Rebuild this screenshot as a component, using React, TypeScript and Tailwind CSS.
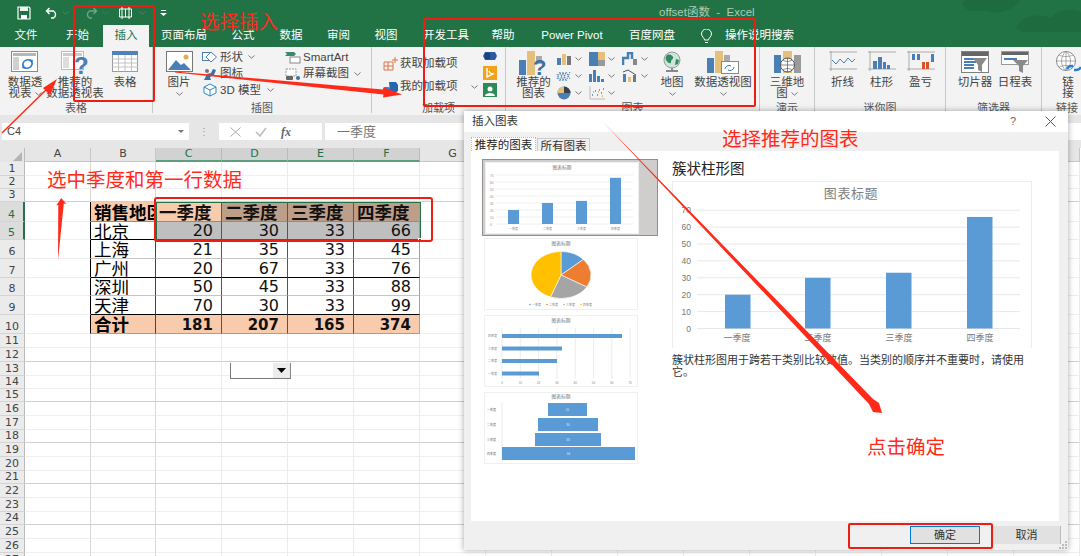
import React from 'react';

const Chev = ({ className = '' }: { className?: string }) => (
  <svg width="7" height="4" viewBox="0 0 7 4" className={`shrink-0 ${className}`}>
    <path d="M.5.5 3.5 3.2 6.5.5" fill="none" stroke="#777" strokeWidth="1" />
  </svg>
);

const Big = ({ icon, lines, chev, w }: { icon: React.ReactNode; lines: string[]; chev?: 'below' | 'inline'; w: string }) => (
  <div className={`flex flex-col items-center pt-[4px] ${w}`}>
    <div className="h-[26px] flex items-start justify-center">{icon}</div>
    {lines.map((l, i) => (
      <div key={i} className="h-[11px] leading-[11px] whitespace-nowrap flex items-center gap-[3px]">
        {l}
        {chev === 'inline' && i === lines.length - 1 && <Chev />}
      </div>
    ))}
    {chev === 'below' && <Chev className="mt-[4px]" />}
  </div>
);

const Group = ({ label, w, pad = '', children }: { label: string; w: string; pad?: string; children: React.ReactNode }) => (
  <div className={`flex flex-col h-[66px] border-r border-[#c8c8c8] shrink-0 ${w}`}>
    <div className={`flex h-[56px] shrink-0 ${pad}`}>{children}</div>
    <div className="h-[12px] shrink-0 leading-[11px] text-center text-[11px] text-[#555] whitespace-nowrap">{label}</div>
  </div>
);

const PivotIcon = () => (
  <svg width="28" height="22" viewBox="0 0 28 22">
    <rect x=".5" y=".5" width="26" height="20" fill="#fff" stroke="#8a8a8a" />
    <rect x="2" y="2" width="23" height="3" fill="#b5b5b5" />
    <rect x="2" y="6" width="6" height="13" fill="#d0d0d0" />
    <path d="M12 15a5 5 0 0 1 8-5M21 11a5 5 0 0 1-8 5" fill="none" stroke="#2b7cd3" strokeWidth="1.6" />
    <path d="m18 8 4 1-1 4ZM15 18l-4-1 1-4Z" fill="#2b7cd3" />
  </svg>
);

const RecPivotIcon = () => (
  <svg width="28" height="24" viewBox="0 0 28 24">
    <rect x=".5" y=".5" width="22" height="18" fill="#fff" stroke="#bbb" />
    <rect x="2" y="2" width="19" height="3" fill="#ccc" />
    <rect x="2" y="6" width="6" height="11" fill="#ddd" />
    <text x="13" y="23" fontSize="24" fontWeight="700" fill="#4a7fb5" fontFamily="Liberation Sans, sans-serif">?</text>
  </svg>
);

const TableIcon = () => (
  <svg width="26" height="21" viewBox="0 0 26 21">
    <rect x=".5" y=".5" width="25" height="20" fill="#fff" stroke="#9a9a9a" />
    <rect x="0" y="0" width="26" height="4" fill="#4f81bd" />
    <path d="M0 8h26M0 12h26M0 16h26M6.500 4v17M13 4v17M19.500 4v17" stroke="#b4b4b4" strokeWidth=".8" />
  </svg>
);

const PictureIcon = () => (
  <svg width="27" height="21" viewBox="0 0 27 21">
    <rect x=".5" y=".5" width="26" height="20" fill="#fff" stroke="#777" />
    <circle cx="20" cy="6" r="2.500" fill="#e9a94b" />
    <path d="M2 19 10 9l5 5 3-2 7 7Z" fill="#4a7fb5" />
  </svg>
);

const Small = ({ children }: { children: React.ReactNode }) => (
  <svg width="16" height="14" viewBox="0 0 16 14" className="shrink-0">{children}</svg>
);

const ShapeIcon = () => <Small><rect x=".5" y="2.500" width="9" height="8" fill="#fff" stroke="#4a7fb5" /><path d="m9 2 5.500 5L9 12 4 7Z" fill="#fff" stroke="#4a7fb5" /></Small>;
const PeopleIcon = () => <Small><path d="M2 13 5 7l4-1 2-4 3 1-2 5-4 2 1 3Z" fill="#3f6f9f" /><circle cx="5" cy="4" r="2" fill="#777" /></Small>;
const CubeIcon = () => <Small><path d="m8 1 6 3v6l-6 3-6-3V4Zm0 6 6-3M8 7 2 4m6 3v6" fill="#fff" stroke="#2b88c9" /></Small>;
const ArtIcon = () => <Small><path d="M0 2h9l2 2-2 2H0l2-2Z" fill="#3a8a6a" /><rect x="5" y="7" width="10" height="6" fill="#fff" stroke="#888" /></Small>;
const ShotIcon = () => <Small><rect x="1" y="2" width="10" height="7" fill="#fff" stroke="#999" strokeDasharray="2 1" /><rect x="1" y="9" width="7" height="4" rx="1" fill="#666" /><circle cx="13" cy="11" r="2" fill="#3f6f9f" /></Small>;
const GetIcon = () => <Small><path d="M1 5h9v8H1ZM1 9h9M5 5v8" fill="none" stroke="#d9754a" /><path d="M12 0v6M9 3h6" stroke="#d9754a" /></Small>;
const MyIcon = () => <Small><path d="M6 2h7l2 3v6l-3 2H7Z" fill="#2566b0" /><rect x="0" y="7" width="7" height="6" rx="2" fill="#1e88e5" /></Small>;
const VisioIcon = () => <Small><path d="M3 3h10l2 4-2 4H3L1 7Z" fill="#2c5aa0" /><rect x="3" y="4" width="5" height="6" fill="#1d3f7a" /></Small>;
const BingIcon = () => <Small><rect x="1" y="0" width="14" height="14" fill="#f2a31a" /><path d="M5 2v9l6-3-3-1-1-2" fill="none" stroke="#fff" strokeWidth="1.400" /></Small>;
const PeopleGreen = () => <Small><rect x="1" y="0" width="14" height="14" fill="#2c8a54" /><circle cx="8" cy="6" r="2.500" fill="#fff" /><path d="M3 13c0-4 10-4 10 0Z" fill="#fff" /></Small>;

const MiniBars = () => (
  <Small><rect x="1" y="6" width="4" height="7" fill="#4a7fb5" /><rect x="6" y="2" width="4" height="11" fill="#e5c07b" /><rect x="11" y="4" width="4" height="9" fill="#777" /></Small>
);
const MiniTree = () => <Small><rect x="0" y="0" width="9" height="14" fill="#4a7fb5" /><rect x="9" y="0" width="7" height="8" fill="#e5c07b" /><rect x="9" y="8" width="7" height="6" fill="#999" /></Small>;
const MiniStep = () => <Small><path d="M1 13V6h5V1h4v6" fill="none" stroke="#4a7fb5" strokeWidth="2.500" /><rect x="11" y="7" width="4" height="6" fill="#888" /></Small>;
const MiniLine = () => <Small><path d="M1 5 4 12l3-9 3 9 4-9M1 10l3-7 3 9 3-9 4 7" fill="none" stroke="#4a7fb5" strokeDasharray="1.500 .7" /></Small>;
const MiniCol = () => <Small><rect x="0" y="5" width="3" height="8" fill="#4a7fb5" /><rect x="4" y="1" width="3" height="12" fill="#4a7fb5" /><rect x="8" y="7" width="3" height="6" fill="#4a7fb5" /><rect x="12" y="10" width="3" height="3" fill="#4a7fb5" /></Small>;
const MiniCombo = () => <Small><rect x="1" y="5" width="3" height="8" fill="#4a7fb5" /><rect x="6" y="8" width="3" height="5" fill="#e5c07b" /><rect x="11" y="6" width="3" height="7" fill="#777" /><path d="m1 3 5-2 8 5" fill="none" stroke="#555" /></Small>;
const MiniPie = () => <Small><circle cx="8" cy="7" r="6.500" fill="#4a7fb5" /><path d="M8 7V.5A6.500 6.500 0 0 0 1.500 7Z" fill="#e5c07b" /><path d="M8 7V.5A6.500 6.500 0 0 1 14.500 7Z" fill="#333" opacity=".8" /></Small>;
const MiniDots = () => <Small><path d="M1 0v13h15" fill="none" stroke="#bbb" /><path d="M3 9h1M6 5h1M8 9h1M10 4h1M12 7h1M14 3h1" stroke="#4a7fb5" strokeWidth="1.500" /><path d="M4 6h1M9 6h1M13 10h1" stroke="#e5a44b" strokeWidth="1.500" /></Small>;

const RecChartIcon = () => (
  <svg width="29" height="25" viewBox="0 0 29 25">
    <rect x="0" y="9" width="7" height="15" fill="#4a7fb5" />
    <rect x="8" y="0" width="8" height="24" fill="#e5c07b" />
    <rect x="17" y="5" width="6" height="8" fill="#aaa" />
    <text x="14" y="24" fontSize="22" fontWeight="700" fill="#3f6f9f" fontFamily="Liberation Sans, sans-serif">?</text>
  </svg>
);
const GlobeIcon = () => (
  <svg width="22" height="23" viewBox="0 0 22 23">
    <circle cx="11" cy="9" r="8" fill="#cfe5dc" stroke="#999" />
    <path d="M6 4c3-1 5 0 6 2s-2 2-2 5-4 0-5-2 0-4 1-5Zm9 4 3 1-1 4-3 1Z" fill="#2f8a5f" />
    <path d="M5 20h12M11 17v3" stroke="#888" strokeWidth="2" />
  </svg>
);
const PivotChartIcon = () => (
  <svg width="32" height="23" viewBox="0 0 32 23">
    <rect x="0" y="7" width="7" height="15" fill="#4a7fb5" />
    <rect x="8" y="0" width="8" height="22" fill="#e5c07b" />
    <rect x="17" y="4" width="6" height="8" fill="#aaa" />
    <rect x="14.500" y="10.500" width="17" height="12" fill="#fff" stroke="#888" />
    <path d="M18 18a4 4 0 0 1 6-3M27 16a4 4 0 0 1-6 3" fill="none" stroke="#2b7cd3" />
  </svg>
);
const MapIcon = () => (
  <svg width="27" height="24" viewBox="0 0 27 24">
    <path d="M0 4h7v18H0Z" fill="#4a7fb5" /><path d="M9 0h9v22H9Z" fill="#e5c07b" /><path d="M20 4h7v18h-7Z" fill="#9a9a9a" />
    <circle cx="13.500" cy="14" r="7" fill="#fff" stroke="#555" /><path d="M6.500 14h14M13.500 7v14M9 9c3 2 6 2 9 0M9 19c3-2 6-2 9 0" fill="none" stroke="#555" strokeWidth=".7" />
  </svg>
);
const SparkFrame = ({ children }: { children: React.ReactNode }) => (
  <svg width="28" height="20" viewBox="0 0 28 20"><path d="M0 1h28M0 18h28M2 0v20" stroke="#999" strokeWidth=".8" />{children}</svg>
);
const SlicerIcon = () => (
  <svg width="28" height="22" viewBox="0 0 28 22">
    <rect x=".5" y=".5" width="27" height="21" fill="#fff" stroke="#7f7f7f" />
    <rect x="1" y="1" width="26" height="4" fill="#666" />
    <path d="M3 8h12M3 11h12M3 14h10M3 17h10" stroke="#4a7fb5" strokeWidth="2" />
    <path d="M12 7h14l-5 7v7l-4-2v-5Z" fill="#8a8a8a" />
  </svg>
);
const TimelineIcon = () => (
  <svg width="28" height="22" viewBox="0 0 28 22">
    <rect x=".5" y=".5" width="27" height="13" fill="#fff" stroke="#999" />
    <rect x="1" y="1" width="26" height="3" fill="#666" />
    <path d="M3 8h13" stroke="#4a7fb5" strokeWidth="2" />
    <path d="M12 9h15l-5 6v7l-4-2v-5Z" fill="#8a8a8a" />
  </svg>
);
const LinkIcon = () => (
  <svg width="26" height="24" viewBox="0 0 26 24">
    <circle cx="11" cy="10" r="9.500" fill="#fff" stroke="#8a8a8a" />
    <path d="M1.500 10h19M11 .5v19M4 4c4 2 10 2 14 0M4 16c4-2 10-2 14 0M11 .5c-6 5-6 14 0 19M11 .5c6 5 6 14 0 19" fill="none" stroke="#8a8a8a" strokeWidth=".7" />
    <path d="M12 18c2-4 5-3 6-3M26 16c-2 4-5 3-7 3" fill="none" stroke="#2b7cd3" strokeWidth="2.500" />
  </svg>
);

const tabs = [
  ['文件', 'w-[52px]'], ['开始', 'w-[51px]'], ['插入', 'w-[46px]'], ['页面布局', 'w-[70px]'], ['公式', 'w-[48px]'], ['数据', 'w-[48px]'],
  ['审阅', 'w-[47px]'], ['视图', 'w-[48px]'], ['开发工具', 'w-[72px]'], ['帮助', 'w-[42px]'], ['Power Pivot', 'w-[96px]'], ['百度网盘', 'w-[64px]'],
];

const TitleBar = () => (
  <div className="bg-[#217346] h-[47px] shrink-0 relative overflow-hidden">
    <svg width="125" height="32" viewBox="0 0 125 32" className="absolute right-0 top-0 opacity-40">
      <path d="M8 0c-6 8 8 14 20 10 14 6 30 0 36-10ZM60 28c4-12 24-16 34-10 10-10 24-10 31-6v20H66Z" fill="#1b6139" />
    </svg>
    <div className="flex h-[25px] items-center relative">
      <div className="w-[659px] flex items-center pl-[17px] shrink-0">
        <svg width="14" height="14" viewBox="0 0 14 14"><path d="M1 1h11l1 1v11H1Z" fill="none" stroke="#fff" strokeWidth="1.200" /><rect x="3" y="1" width="8" height="4" fill="#fff" opacity=".9" /><rect x="4" y="9" width="6" height="4" fill="#fff" /></svg>
        <svg width="14" height="12" viewBox="0 0 14 12" className="ml-[14px]"><path d="M1.500 4h7a4 4 0 0 1 0 7H6M4.500 1 1.500 4l3 3" fill="none" stroke="#fff" strokeWidth="1.400" /></svg>
        <Chev className="ml-[3px] opacity-70" />
        <svg width="14" height="12" viewBox="0 0 14 12" className="ml-[15px]"><path d="M12.500 4h-7a4 4 0 0 0 0 7H8M9.500 1l3 3-3 3" fill="none" stroke="#6fa588" strokeWidth="1.400" /></svg>
        <Chev className="ml-[4px] opacity-50" />
        <svg width="15" height="14" viewBox="0 0 15 14" className="ml-[9px]"><path d="M1.500 3h12v8h-12ZM4 1v12M11 1v12M7.500 3v8" fill="none" stroke="#fff" /></svg>
        <Chev className="ml-[6px] opacity-70" />
        <svg width="7" height="6" viewBox="0 0 7 6" className="ml-[14px]"><path d="M0 3h7L3.500 6Z" fill="#fff" /><path d="M1 .5h5" stroke="#fff" /></svg>
      </div>
      <span className="text-[11.5px] text-[#a9cdb8] whitespace-pre">offset函数  -  Excel</span>
    </div>
    <div className="flex h-[22px] items-stretch relative text-[11.5px] text-white">
      {tabs.map(([t, w]) => (
        <div key={t} className={`${w} flex items-center justify-center whitespace-nowrap ${t === '插入' ? 'bg-[#f3f3f3] text-[#217346]' : ''}`}>{t}</div>
      ))}
      <div className="flex items-center pl-[16px]">
        <svg width="13" height="15" viewBox="0 0 13 15"><path d="M4.500 11c0-2-3-3.500-3-6a5 5 0 0 1 10 0c0 2.500-3 4-3 6ZM5 13.500h3" fill="none" stroke="#fff" /></svg>
        <span className="ml-[12px]">操作说明搜索</span>
      </div>
    </div>
  </div>
);

const chartCells: React.ReactNode[] = [
  <MiniBars />, <MiniTree />, <MiniStep />,
  <MiniLine />, <MiniCol />, <MiniCombo />,
  <MiniPie />, <MiniDots />,
];

const Ribbon = () => (
  <div className="bg-[#f3f3f3] h-[68px] shrink-0 flex text-[11.5px] text-[#444] overflow-hidden">
    <Group label="表格" w="w-[153px]">
      <Big w="w-[50px]" icon={<PivotIcon />} lines={['数据透', '视表']} chev="inline" />
      <Big w="w-[50px]" icon={<RecPivotIcon />} lines={['推荐的', '数据透视表']} />
      <Big w="w-[50px]" icon={<TableIcon />} lines={['表格']} />
    </Group>
    <Group label="插图" w="w-[219px]" pad="pl-[3px]">
      <Big w="w-[46px]" icon={<PictureIcon />} lines={['图片']} chev="below" />
      <div className="w-[83px] pt-[2px]">
        <div className="h-[16.500px] flex items-center gap-[2px]"><ShapeIcon />形状<Chev className="ml-[3px]" /></div>
        <div className="h-[16.500px] flex items-center gap-[2px]"><PeopleIcon />图标</div>
        <div className="h-[16.500px] flex items-center gap-[2px]"><CubeIcon />3D 模型<Chev className="ml-[4px]" /></div>
      </div>
      <div className="pt-[2px]">
        <div className="h-[16.500px] flex items-center gap-[2px]"><ArtIcon />SmartArt</div>
        <div className="h-[16.500px] flex items-center gap-[2px]"><ShotIcon />屏幕截图<Chev className="ml-[3px]" /></div>
      </div>
    </Group>
    <Group label="加载项" w="w-[134px]" pad="pl-[11px]">
      <div className="w-[99px] pt-[5px]">
        <div className="h-[23px] flex items-center gap-[1px] whitespace-nowrap"><GetIcon />获取加载项</div>
        <div className="h-[23px] flex items-center gap-[1px] whitespace-nowrap"><MyIcon />我的加载项<Chev className="ml-[12px]" /></div>
      </div>
      <div className="pt-[2px] flex flex-col gap-[3px]"><VisioIcon /><BingIcon /><PeopleGreen /></div>
    </Group>
    <Group label="图表" w="w-[254px]" pad="pl-[5px]">
      <Big w="w-[45px]" icon={<RecChartIcon />} lines={['推荐的', '图表']} />
      <div className="w-[99px] grid grid-cols-3 auto-rows-[17px] pt-[3px]">
        {chartCells.map((icon, i) => (
          <div key={i} className="flex items-center gap-[3px]">{icon}<Chev /></div>
        ))}
      </div>
      <Big w="w-[34px]" icon={<GlobeIcon />} lines={['地图']} chev="below" />
      <Big w="w-[68px]" icon={<PivotChartIcon />} lines={['数据透视图']} chev="below" />
    </Group>
    <Group label="演示" w="w-[55px]">
      <Big w="w-full" icon={<MapIcon />} lines={['三维地', '图']} chev="inline" />
    </Group>
    <Group label="迷你图" w="w-[131px]" pad="pl-[8px]">
      <Big w="w-[39px]" lines={['折线']} icon={<SparkFrame><path d="M3 9l4 4 4-5 4 4 4-5 4 4 3-3" fill="none" stroke="#4a7fb5" /></SparkFrame>} />
      <Big w="w-[39px]" lines={['柱形']} icon={<SparkFrame><path d="M5 10h4v8H5ZM10 6h4v12h-4ZM15 11h3v7h-3ZM19 14h3v4h-3Z" fill="#4a7fb5" /></SparkFrame>} />
      <Big w="w-[39px]" lines={['盈亏']} icon={<SparkFrame><path d="M5 3h3v6H5ZM10 3h3v6h-3ZM24 3h3v8h-3Z" fill="#4a7fb5" /><path d="M15 11h3v7h-3ZM19 11h3v7h-3Z" fill="#d9542b" /></SparkFrame>} />
    </Group>
    <Group label="筛选器" w="w-[96px]" pad="pl-[9px]">
      <Big w="w-[40px]" icon={<SlicerIcon />} lines={['切片器']} />
      <Big w="w-[40px]" icon={<TimelineIcon />} lines={['日程表']} />
    </Group>
    <div className="flex flex-col h-[66px] flex-1">
      <div className="flex h-[56px] shrink-0 pl-[6px]"><Big w="w-[40px]" icon={<LinkIcon />} lines={['链', '接']} /></div>
      <div className="h-[12px] shrink-0 leading-[11px] text-[11px] pl-[14px] text-[#555] whitespace-nowrap">链接</div>
    </div>
  </div>
);

const FormulaBar = () => (
  <div className="bg-[#e6e6e6] h-[33px] shrink-0 flex items-start pt-[8px] pl-[2px]">
    <div className="w-[187px] h-[17px] bg-white flex items-center justify-between px-[5px] text-[11px] text-[#444]">C4<svg width="6" height="3" viewBox="0 0 6 3"><path d="M0 0h6L3 3Z" fill="#777" /></svg></div>
    <div className="w-[30px] flex justify-center items-center h-[17px] text-[#999] text-[10px]">⋮</div>
    <div className="w-[103px] h-[17px] bg-white flex items-center pl-[11px] gap-[14px]">
      <svg width="11" height="10" viewBox="0 0 11 10"><path d="m.5.5 10 9m0-9-10 9" stroke="#aaa" /></svg>
      <svg width="12" height="10" viewBox="0 0 12 10"><path d="m1 5 4 4 6-8" fill="none" stroke="#bbb" strokeWidth="1.500" /></svg>
      <span className="font-['Liberation_Serif',serif] italic text-[12px] text-[#666] font-bold">fx</span>
    </div>
    <div className="ml-[3px] flex-1 h-[17px] bg-white flex items-center pl-[12px] text-[13px] text-[#777]">一季度</div>
  </div>
);

const colW = ['w-[66px]', 'w-[65px]', 'w-[66px]', 'w-[66px]', 'w-[66px]', 'w-[66px]', 'w-[66px]', 'w-[66px]', 'w-[66px]', 'w-[66px]', 'w-[66px]', 'w-[66px]', 'w-[66px]', 'w-[66px]', 'w-[66px]', 'w-[66px]'];
const colNames = ['A', 'B', 'C', 'D', 'E', 'F', 'G', 'H', 'I', 'J', 'K', 'L', 'M', 'N', 'O', 'P'];

type Row = { n: number; h: string; strong?: boolean };
const plainRows: Row[] = [
  { n: 11, h: 'h-[14px]' }, { n: 12, h: 'h-[14px]', strong: true }, { n: 13, h: 'h-[14px]' }, { n: 14, h: 'h-[13px]' }, { n: 15, h: 'h-[13px]', strong: true },
  { n: 16, h: 'h-[14px]' }, { n: 17, h: 'h-[14px]' }, { n: 18, h: 'h-[13px]', strong: true }, { n: 19, h: 'h-[14px]' }, { n: 20, h: 'h-[14px]' },
  { n: 21, h: 'h-[13px]', strong: true }, { n: 22, h: 'h-[14px]' }, { n: 23, h: 'h-[14px]' }, { n: 24, h: 'h-[13px]', strong: true }, { n: 25, h: 'h-[14px]' },
  { n: 26, h: 'h-[14px]' }, { n: 27, h: 'h-[14px]' },
];

const RowHead = ({ n, sel }: { n: number; sel?: boolean }) => (
  <div className={`w-[25px] shrink-0 flex items-end justify-center leading-[13px] text-[11px] font-['DejaVu_Sans',sans-serif] border-b border-[#d4d4d4] ${sel ? 'bg-[#dcdcdc] text-[#217346] border-r-2 border-r-[#217346]' : 'bg-[#ebebeb] text-[#444] border-r border-r-[#bbb]'}`}>{n}</div>
);

const PlainRow = ({ r }: { r: Row }) => (
  <div className={`flex ${r.h}`}>
    <RowHead n={r.n} />
    {colW.map((w, i) => (
      <div key={i} className={`${w} shrink-0 border-b border-r ${r.strong ? 'border-b-[#cfcfcf]' : 'border-b-[#efefef]'} ${i < 2 ? 'border-r-[#d8d8d8]' : 'border-r-[#ececec]'}`} />
    ))}
  </div>
);

type DataRow = { n: number; h: string; name: string; vals: (string | number)[]; kind: 'head' | 'sel' | 'body' | 'total'; line: string };
const dataRows: DataRow[] = [
  { n: 4, h: 'h-[20px]', name: '销售地区', vals: ['一季度', '二季度', '三季度', '四季度'], kind: 'head', line: 'border-b-[#9a8a7c]' },
  { n: 5, h: 'h-[18px]', name: '北京', vals: [20, 30, 33, 66], kind: 'sel', line: 'border-b-black' },
  { n: 6, h: 'h-[19px]', name: '上海', vals: [21, 35, 33, 45], kind: 'body', line: 'border-b-[#c4c4c4]' },
  { n: 7, h: 'h-[19px]', name: '广州', vals: [20, 67, 33, 76], kind: 'body', line: 'border-b-black' },
  { n: 8, h: 'h-[18px]', name: '深圳', vals: [50, 45, 33, 88], kind: 'body', line: 'border-b-[#c4c4c4]' },
  { n: 9, h: 'h-[19px]', name: '天津', vals: [70, 30, 33, 99], kind: 'body', line: 'border-b-black' },
  { n: 10, h: 'h-[19px]', name: '合计', vals: [181, 207, 165, 374], kind: 'total', line: 'border-b-[#a0a0a0]' },
];

const cellFill = (kind: DataRow['kind'], i: number) => {
  if (kind === 'head') return i === 0 ? 'bg-[#f8cbad]' : 'bg-[#bd9e88]';
  if (kind === 'sel') return 'bg-[#bfbfbf]';
  if (kind === 'total') return 'bg-[#f8cbad]';
  return 'bg-white';
};

const TableRow = ({ r }: { r: DataRow }) => {
  const isHead = r.kind === 'head';
  const isTotal = r.kind === 'total';
  return (
    <div className={`flex ${r.h}`}>
      <RowHead n={r.n} sel={r.n < 6} />
      <div className="w-[66px] shrink-0 border-r border-r-black border-b border-b-[#efefef]" />
      <div className={`w-[65px] shrink-0 overflow-hidden whitespace-nowrap border-r border-b border-r-[#444] ${r.line} ${isHead || isTotal ? 'bg-[#f8cbad] font-bold text-[17.500px]' : 'text-[17.500px]'} leading-[16px] pl-[3px] pt-[2px] text-black flex items-center`}>{r.name}</div>
      {r.vals.map((v, i) => (
        <div key={i} className={`w-[66px] shrink-0 overflow-hidden whitespace-nowrap flex items-center justify-end border-r border-b ${i === 3 ? 'border-r-[#a0a0a0]' : 'border-r-[#555]'} ${r.line} ${cellFill(r.kind, i)} ${isHead ? 'font-bold text-[17.500px] leading-[16px] justify-start pl-[3px] pt-[2px]' : isTotal ? "font-bold text-[15px] leading-[16px] pr-[8px] pt-[1px] font-['DejaVu_Sans',sans-serif]" : "text-[16px] leading-[16px] pr-[8px] pt-[1px] font-['DejaVu_Sans',sans-serif]"} text-[#111]`}>{v}</div>
      ))}
      {colW.slice(6).map((w, i) => (
        <div key={i} className={`${w} shrink-0 border-r border-r-[#ececec] border-b border-b-[#efefef]`} />
      ))}
    </div>
  );
};

const Sheet = () => (
  <div className="flex-1 overflow-hidden bg-white relative">
    <div className="flex h-[14px] text-[11px] font-['DejaVu_Sans',sans-serif]">
      <div className="w-[25px] shrink-0 bg-[#e6e6e6] border-r border-[#bbb] flex justify-end items-end pr-[2px] pb-[1px]">
        <svg width="9" height="9" viewBox="0 0 9 9"><path d="M9 0v9H0Z" fill="#b4b4b4" /></svg>
      </div>
      {colW.map((w, i) => {
        const sel = i >= 2 && i <= 5;
        return (
          <div key={i} className={`${w} shrink-0 flex items-center justify-center border-r ${sel ? 'bg-[#d2d2d2] text-[#217346] border-b-2 border-b-[#5d9c7d] border-r-[#bbb]' : 'bg-[#e6e6e6] text-[#444] border-r-[#c6c6c6] border-b border-b-[#c6c6c6]'}`}>{colNames[i]}</div>
        );
      })}
    </div>
    <PlainRow r={{ n: 1, h: 'h-[14px]' }} />
    <PlainRow r={{ n: 2, h: 'h-[13px]' }} />
    <PlainRow r={{ n: 3, h: 'h-[13px]', strong: true }} />
    {dataRows.map((r) => <TableRow key={r.n} r={r} />)}
    {plainRows.map((r) => <PlainRow key={r.n} r={r} />)}
    {/* selection outline + fill handle */}
    <div className="absolute left-[156px] top-[54px] w-[265px] h-[38px] border border-[#217346] pointer-events-none" />
    <div className="absolute left-[418px] top-[90px] w-[4px] h-[4px] bg-[#217346] border border-white" />
    {/* form control dropdown */}
    <div className="absolute left-[230px] top-[215px] w-[61px] h-[16px] bg-white border-l border-b border-[#7a7a7a] flex justify-end">
      <div className="w-[18px] h-full bg-[#ececec] border-r border-[#888] flex items-center justify-center">
        <svg width="9" height="5" viewBox="0 0 9 5"><path d="M0 0h9L4.500 5Z" fill="#000" /></svg>
      </div>
    </div>
  </div>
);

const Thumb = ({ children }: { children: React.ReactNode }) => (
  <svg width="152" height="70" viewBox="0 0 152 70" className="bg-white block outline outline-[#f0f0f0]">{children}</svg>
);

const MiniTitle = ({ y = 6 }: { y?: number }) => <text x="76" y={y} fontSize="4.800" textAnchor="middle" fill="#777">图表标题</text>;

const ThumbColumn = () => (
  <Thumb>
    <MiniTitle />
    {[0, 1, 2, 3, 4, 5, 6, 7].map((k) => (
      <g key={k}>
        <path d={`M10 ${61 - k * 7}h137`} stroke="#e8e8e8" strokeWidth=".7" />
        <text x="4" y={62.500 - k * 7} fontSize="3" fill="#888">{k * 10}</text>
      </g>
    ))}
    {[[22, 20], [56, 30], [90, 33], [124, 66]].map(([x, v], i) => (
      <g key={x}>
        <rect x={x} y={61 - v * 0.7} width="11" height={v * 0.7} fill="#5b9bd5" />
        <text x={x + 5.500} y="67" fontSize="3" textAnchor="middle" fill="#888">{['一季度', '二季度', '三季度', '四季度'][i]}</text>
      </g>
    ))}
  </Thumb>
);

const ThumbPie = () => (
  <Thumb>
    <MiniTitle />
    <g stroke="#fff" strokeWidth=".6">
      <path d="M76 36V12.500A30 23.500 0 0 1 98.400 20.400Z" fill="#5b9bd5" />
      <path d="M76 36 98.400 20.400A30 23.500 0 0 1 101.800 48Z" fill="#ed7d31" />
      <path d="M76 36 101.800 48A30 23.500 0 0 1 65.500 58Z" fill="#a5a5a5" />
      <path d="M76 36 65.500 58A30 23.500 0 0 1 76 12.500Z" fill="#ffc000" />
    </g>
    {[['#5b9bd5', 45, '一季度'], ['#ed7d31', 62, '二季度'], ['#a5a5a5', 79, '三季度'], ['#ffc000', 96, '四季度']].map(([c, x, t]) => (
      <g key={t as string}>
        <circle cx={x as number} cy="65.500" r=".8" fill={c as string} />
        <text x={(x as number) + 2} y="66.700" fontSize="3" fill="#888">{t}</text>
      </g>
    ))}
  </Thumb>
);

const ThumbBar = () => (
  <Thumb>
    <MiniTitle />
    {[0, 1, 2, 3, 4, 5, 6, 7].map((k) => (
      <g key={k}>
        <path d={`M${17 + k * 18.300} 12v51`} stroke="#e4e4e4" strokeWidth=".7" />
        <text x={17 + k * 18.300} y="67.500" fontSize="3" textAnchor="middle" fill="#888">{k * 10}</text>
      </g>
    ))}
    {[[18, 120, '四季度'], [30.500, 60, '三季度'], [43, 55, '二季度'], [55.500, 37, '一季度']].map(([y, w, t]) => (
      <g key={t as string}>
        <rect x="17" y={y as number} width={w as number} height="4" fill="#5b9bd5" />
        <text x="3" y={(y as number) + 3} fontSize="3" fill="#888">{t}</text>
      </g>
    ))}
  </Thumb>
);

const ThumbFunnel = () => (
  <Thumb>
    <MiniTitle y={5} />
    <path d="M17 9v59" stroke="#ddd" strokeWidth=".6" />
    {[[63, 10, 39, '一季度', 20], [53, 25, 60, '二季度', 30], [50, 40, 66, '三季度', 33], [17, 54, 133, '四季度', 66]].map(([x, y, w, t, v]) => (
      <g key={t as string}>
        <rect x={x as number} y={y as number} width={w as number} height="13" fill="#5b9bd5" />
        <text x={(x as number) + (w as number) / 2} y={(y as number) + 7.500} fontSize="3" textAnchor="middle" fill="#dcecf8">{v}</text>
        <text x="2" y={(y as number) + 7.500} fontSize="3" fill="#777">{t}</text>
      </g>
    ))}
  </Thumb>
);

const BigChart = () => (
  <svg width="360" height="167" viewBox="0 0 360 167" className="block">
    <path d="M0 .5h360M.5 0v167M359.500 0v167" stroke="#ececec" fill="none" />
    <text x="179" y="17" fontSize="13" textAnchor="middle" fill="#808080" letterSpacing=".6">图表标题</text>
    {[0, 1, 2, 3, 4, 5, 6, 7].map((k) => (
      <g key={k}>
        <path d={`M25 ${147.500 - k * 16.900}h323`} stroke="#e8e8e8" />
        <text x="19" y={150.500 - k * 16.900} fontSize="8.500" textAnchor="end" fill="#777">{k * 10}</text>
      </g>
    ))}
    {[[53, 20], [133, 30], [214, 33], [295, 66]].map(([x, v]) => (
      <rect key={x} x={x} y={147.500 - v * 1.690} width="25.500" height={v * 1.690} fill="#5b9bd5" />
    ))}
    {[[65, '一季度'], [146, '二季度'], [227, '三季度'], [308, '四季度']].map(([x, t]) => (
      <text key={t as string} x={x as number} y="160" fontSize="9" textAnchor="middle" fill="#777">{t}</text>
    ))}
  </svg>
);

const Dialog = () => (
  <div className="absolute left-[464px] top-[111px] w-[604px] h-[439px] bg-[#f0f0f0] shadow-[0_0_6px_rgba(0,0,0,0.35)] flex flex-col text-[#333]">
    <div className="bg-white h-[21px] flex items-center justify-between pl-[8px] pr-[12px] text-[11.500px] shrink-0">
      <span>插入图表</span>
      <div className="flex items-center gap-[29px]">
        <span className="text-[11px] text-[#666]">?</span>
        <svg width="11" height="11" viewBox="0 0 11 11"><path d="m.5.5 10 10m0-10-10 10" stroke="#555" /></svg>
      </div>
    </div>
    <div className="h-[19px] flex items-end pl-[7px] text-[11.500px] shrink-0">
      <div className="w-[65px] h-[14px] bg-white border border-b-0 border-[#bbb] border-dotted leading-[15px] text-center text-[#222] whitespace-nowrap overflow-hidden">推荐的图表</div>
      <div className="ml-[1px] w-[53px] h-[13px] border border-b-0 border-[#ccc] leading-[14px] text-center whitespace-nowrap overflow-hidden">所有图表</div>
    </div>
    <div className="mx-[7px] w-[588px] h-[370px] bg-white flex shrink-0">
      <div className="w-[201px] shrink-0 pt-[8px] pl-[11px]">
        <div className="w-[176px] h-[77px] bg-[#cfcecc] border border-[#8f8f8f] pl-[3px] pt-[3px]"><ThumbColumn /></div>
        <div className="pl-[3px] pt-[3px] flex flex-col gap-[7px]">
          <ThumbPie />
          <ThumbBar />
          <ThumbFunnel />
        </div>
      </div>
      <div className="flex-1 pt-[9px]">
        <div className="text-[14.500px] h-[21px] leading-[19px] text-[#222]">簇状柱形图</div>
        <BigChart />
        <p className="mt-[6px] w-[356px] text-[11px] leading-[12px] text-[#333]">簇状柱形图用于跨若干类别比较数值。当类别的顺序并不重要时，请使用它。</p>
      </div>
    </div>
    <div className="flex-1 flex justify-end items-start pt-[5px] pr-[7px] gap-[13px] text-[11px] text-[#333] relative">
      <div className="w-[70px] h-[18px] bg-[#e1e1e1] border border-[#0078d7] flex items-center justify-center">确定</div>
      <div className="w-[68px] h-[18px] bg-[#e1e1e1] border-r border-[#bbb] flex items-center justify-center">取消</div>
      <svg width="8" height="8" viewBox="0 0 8 8" className="absolute right-[1px] bottom-[1px]"><path d="M6 0h2v2H6ZM3 3h2v2H3ZM6 3h2v2H6ZM0 6h2v2H0ZM3 6h2v2H3ZM6 6h2v2H6Z" fill="#bbb" /></svg>
    </div>
  </div>
);

// red marks that the author of the screenshot drew on top
const Marks = () => (
  <>
    <div className="absolute left-[73px] top-[5px] w-[82px] h-[97px] border-2 border-[#ee1c12] rounded-[2px]" />
    <div className="absolute left-[423px] top-[18px] w-[333px] h-[89px] border-2 border-[#ee1c12] rounded-[2px]" />
    <div className="absolute left-[154px] top-[197px] w-[279px] h-[45px] border-2 border-[#ee1c12] rounded-[3px]" />
    <div className="absolute left-[848px] top-[523px] w-[145px] h-[26px] border-2 border-[#ee1c12] rounded-[2px]" />
    <svg width="1081" height="556" viewBox="0 0 1081 556" className="absolute left-0 top-0 pointer-events-none">
      <path d="M2 133 48 88" stroke="#ff2a1a" strokeWidth="1.500" />
      <path d="m57 79-14 9 7 7Z" fill="#ff2a1a" />
      <path d="m175 71.500 208 18 1-2 18 7-19 3 .5-3L175 72.500Z" fill="#ff2a1a" />
      <path d="m58 260 .3-55-2 .5 5-7.500 5 6-2.500-.5Z" fill="#ff2a1a" />
      <path d="M603 122 873 399l6 4 3 10-9-1-4-8Z" fill="#ff2a1a" />
    </svg>
    <div className="absolute left-[200px] top-[10px] text-[19.500px] leading-[24px] text-[#ff2a1a] whitespace-nowrap">选择插入</div>
    <div className="absolute left-[722px] top-[127px] text-[19.500px] leading-[24px] text-[#ff2a1a] whitespace-nowrap">选择推荐的图表</div>
    <div className="absolute left-[47px] top-[168px] text-[19.500px] leading-[24px] text-[#ff2a1a] whitespace-nowrap">选中季度和第一行数据</div>
    <div className="absolute left-[867px] top-[435px] text-[19.500px] leading-[24px] text-[#ff2a1a] whitespace-nowrap">点击确定</div>
  </>
);

export default function App() {
  return (
    <div className="relative w-[1081px] h-[556px] overflow-hidden flex flex-col bg-white font-['Liberation_Sans','Noto_Sans_CJK_SC',sans-serif]">
      <TitleBar />
      <Ribbon />
      <FormulaBar />
      <Sheet />
      <Dialog />
      <Marks />
    </div>
  );
}
